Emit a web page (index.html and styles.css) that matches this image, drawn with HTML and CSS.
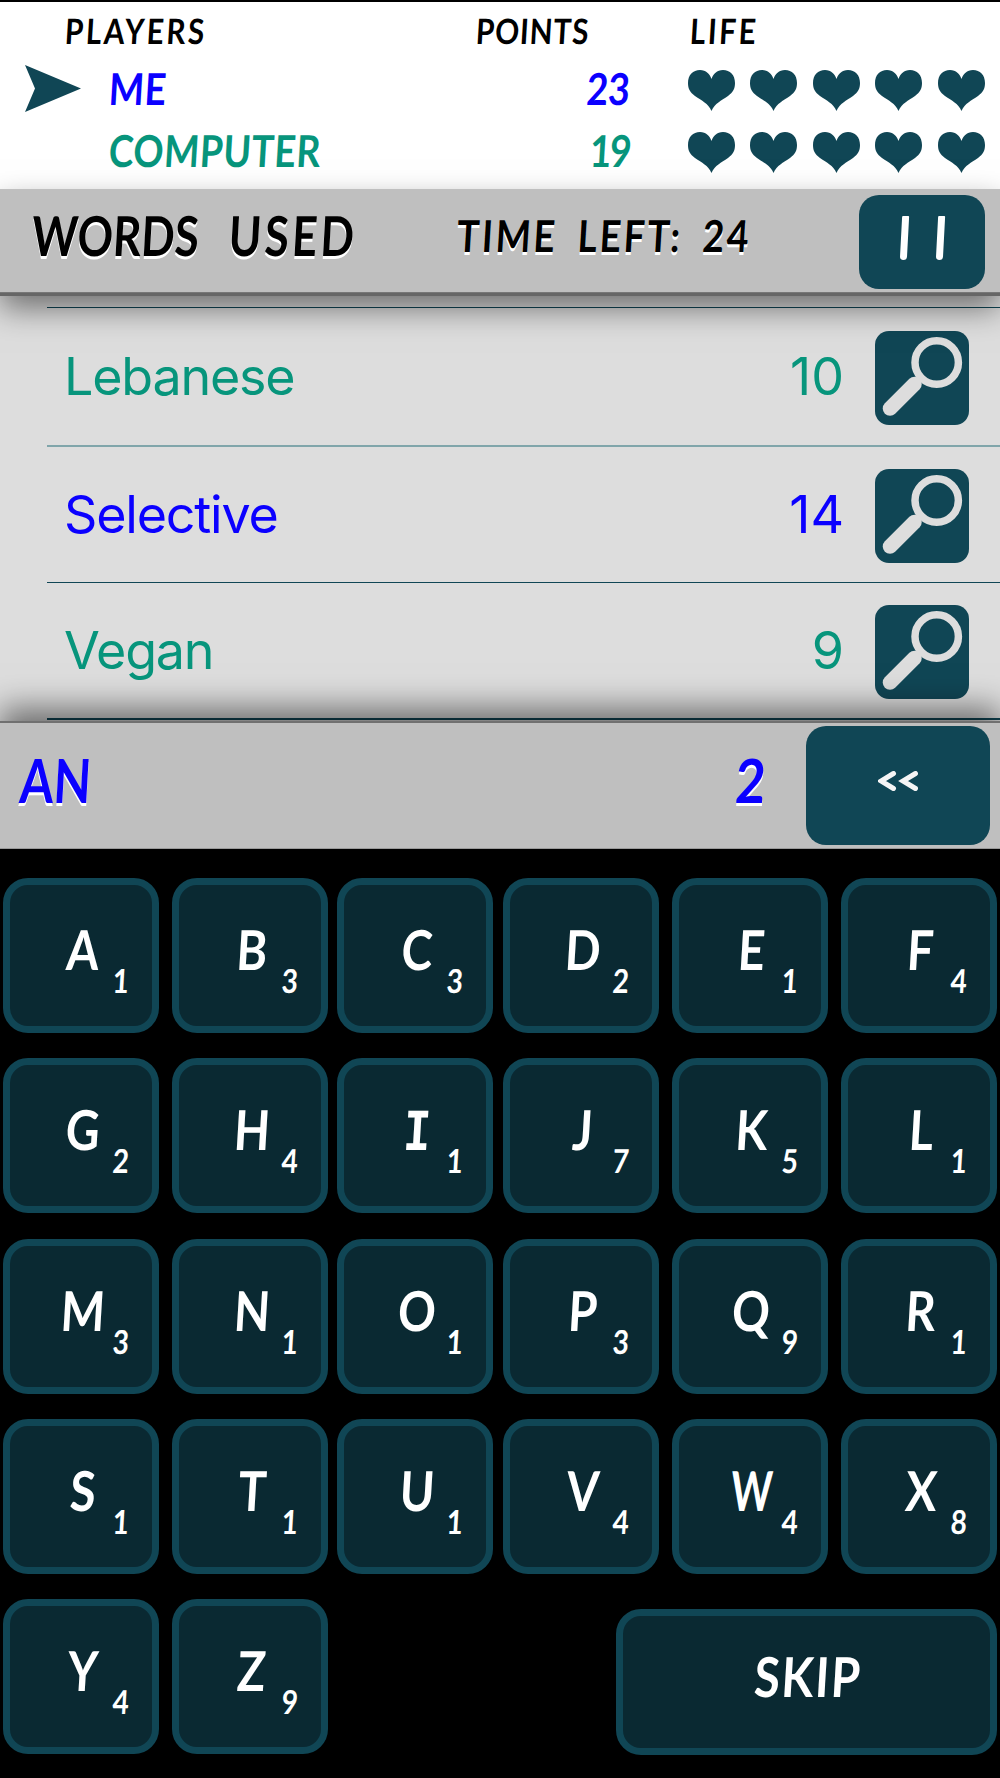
FILE: index.html
```html
<!doctype html>
<html>
<head>
   <title>Words Used</title>
   <meta charset="utf-8">
   <meta name="viewport" content="width=device-width, initial-scale=1.0">
   <link rel="stylesheet" href="styles.css">
</head>
<body>

   <!-- shared icons -->
   <svg class="defs" width="0" height="0">
      <symbol id="heart" viewBox="0 0 47 41">
         <path d="M23.5 41C20 33 14 31 7 26C2 22 0 19 0 13C0 5 5 0 12 0C18 0 22 4 23.5 9C25 4 29 0 35 0C42 0 47 5 47 13C47 19 45 22 40 26C33 31 27 33 23.5 41Z"/>
      </symbol>
      <symbol id="glass" viewBox="0 0 94 94">
         <circle cx="61.7" cy="31.5" r="21.7" fill="none" stroke="#ddd" stroke-width="7.5"/>
         <path d="M15 77.5L39.5 53" fill="none" stroke="#ddd" stroke-width="14.5" stroke-linecap="round"/>
      </symbol>
   </svg>

   <div class="score">
      <div class="score-head">
         <span class="col-name"><b class="t">PLAYERS</b></span>
         <span class="col-points"><b class="t">POINTS</b></span>
         <span class="col-life"><b class="t">LIFE</b></span>
      </div>
      <div class="score-row me">
         <svg class="arrow" viewBox="0 0 56 47"><path d="M0 0L56 23.5L0 47L10 23.5Z"/></svg>
         <b class="t name">ME</b>
         <b class="t pts">23</b>
         <div class="hearts">
            <svg><use href="#heart"/></svg><svg><use href="#heart"/></svg><svg><use href="#heart"/></svg><svg><use href="#heart"/></svg><svg><use href="#heart"/></svg>
         </div>
      </div>
      <div class="score-row computer">
         <span class="arrow"></span>
         <b class="t name">COMPUTER</b>
         <b class="t pts">19</b>
         <div class="hearts">
            <svg><use href="#heart"/></svg><svg><use href="#heart"/></svg><svg><use href="#heart"/></svg><svg><use href="#heart"/></svg><svg><use href="#heart"/></svg>
         </div>
      </div>
   </div>

   <div class="bar">
      <span class="bar-title"><b class="t">WORDS <span class="used">USED</span></b></span>
      <span class="bar-time"><b class="t">TIME LEFT: 24</b></span>
      <div class="btn pause"><i></i><i></i></div>
   </div>

   <div class="words">
      <div class="word computer">
         <span class="txt">Lebanese</span><span class="num">10</span>
         <svg class="look"><use href="#glass"/></svg>
      </div>
      <div class="word me">
         <span class="txt">Selective</span><span class="num">14</span>
         <svg class="look"><use href="#glass"/></svg>
      </div>
      <div class="word computer">
         <span class="txt">Vegan</span><span class="num">9</span>
         <svg class="look"><use href="#glass"/></svg>
      </div>
   </div>

   <div class="entry me">
      <span class="typed"><b class="t">AN</b></span>
      <b class="t total">2</b>
      <div class="btn back"><svg viewBox="0 0 40 20"><path d="M15.500 2.500L3 10L15.500 17.500M37.500 2.500L25 10L37.500 17.500"/></svg></div>
   </div>

   <div class="keys">
      <div class="key"><b class="t">A</b><small class="t">1</small></div>
      <div class="key"><b class="t">B</b><small class="t">3</small></div>
      <div class="key"><b class="t">C</b><small class="t">3</small></div>
      <div class="key"><b class="t">D</b><small class="t">2</small></div>
      <div class="key"><b class="t">E</b><small class="t">1</small></div>
      <div class="key"><b class="t">F</b><small class="t">4</small></div>
      <div class="key"><b class="t">G</b><small class="t">2</small></div>
      <div class="key"><b class="t">H</b><small class="t">4</small></div>
      <div class="key"><b class="t serif-i">I</b><small class="t">1</small></div>
      <div class="key"><b class="t">J</b><small class="t">7</small></div>
      <div class="key"><b class="t">K</b><small class="t">5</small></div>
      <div class="key"><b class="t">L</b><small class="t">1</small></div>
      <div class="key"><b class="t">M</b><small class="t">3</small></div>
      <div class="key"><b class="t">N</b><small class="t">1</small></div>
      <div class="key"><b class="t">O</b><small class="t">1</small></div>
      <div class="key"><b class="t">P</b><small class="t">3</small></div>
      <div class="key"><b class="t">Q</b><small class="t">9</small></div>
      <div class="key"><b class="t">R</b><small class="t">1</small></div>
      <div class="key"><b class="t">S</b><small class="t">1</small></div>
      <div class="key"><b class="t">T</b><small class="t">1</small></div>
      <div class="key"><b class="t">U</b><small class="t">1</small></div>
      <div class="key"><b class="t">V</b><small class="t">4</small></div>
      <div class="key"><b class="t w">W</b><small class="t">4</small></div>
      <div class="key"><b class="t">X</b><small class="t">8</small></div>
      <div class="key"><b class="t">Y</b><small class="t">4</small></div>
      <div class="key"><b class="t">Z</b><small class="t">9</small></div>
      <div class="key skip"><b class="t">SKIP</b></div>
   </div>

</body>
</html>
```

FILE: styles.css
```css
*{
   box-sizing: border-box;
}

body{
   margin: 0;
   width: 1000px;
   height: 1778px;
   overflow: hidden;
   background: #000;
   color: #000;
   font-family: Lato, sans-serif;
}

.defs{
   display: block;
}

/* narrow, slightly slanted lettering */
.t{
   display: inline-block;
   font-weight: bold;
   white-space: nowrap;
   transform: scaleX(.85) skewX(-4deg);
   transform-origin: 0 50%;
}

.me{
   color: #0b00ff;
}

.computer{
   color: #07957c;
}

/* scoreboard */
.score{
   height: 189px;
   background: #fff;
   border-top: 2px solid #000;
}

.score-head{
   display: flex;
   height: 55px;
   line-height: 57px;
   font-size: 35px;
   letter-spacing: 3px;
}

.col-name{
   width: 476px;
   padding-left: 65px;
}

.col-points{
   width: 214px;
   letter-spacing: 1px;
}

.score-row{
   display: flex;
   align-items: center;
   height: 62.5px;
   padding-left: 25px;
   font-size: 44px;
}

.arrow{
   width: 56px;
   height: 47px;
   margin-right: 28px;
   fill: #104655;
}

.name{
   flex: 1;
   margin-top: -1px;
   letter-spacing: .5px;
}

.pts{
   margin-top: -1px;
   transform-origin: 100% 50%;
}

.computer .pts{
   letter-spacing: -2px;
}

.hearts{
   display: flex;
   gap: 15.500px;
   width: 370px;
   padding-left: 57.500px;
   margin-top: 4px;
}

.hearts svg{
   flex: none;
   width: 47px;
   height: 41px;
   fill: #104655;
}

/* title bar */
.bar{
   position: relative;
   z-index: 1;
   display: flex;
   height: 104px;
   padding: 6px 15px 0 32px;
   background: #bfbfbf;
   border-bottom: 1px solid #777;
   box-shadow: 0 3px 0 #666, 0 15px 30px rgba(0,0,0,.5);
   line-height: 81px;
   text-shadow: 0 3px 0 #fff;
}

.bar-title{
   width: 425px;
   font-size: 55px;
   word-spacing: 24px;
}

.bar-title .t{
   transform: scaleX(.8) skewX(-4deg);
}

.used{
   letter-spacing: 4px;
}

.bar-time{
   flex: 1;
   font-size: 44px;
   letter-spacing: 3px;
   word-spacing: 10px;
}

.btn{
   display: flex;
   justify-content: center;
   background: #104655;
   border-radius: 20px;
}

.pause{
   width: 126px;
   height: 94px;
   gap: 30px;
   padding-top: 21px;
}

.pause i{
   width: 6.500px;
   height: 44px;
   background: #fff;
   border-radius: 1px 1px 4px 4px;
   transform: skewX(-3deg);
}

/* list of used words */
.words{
   height: 430px;
   padding: 14px 0 0 47px;
   background: #ddd;
   font-family: Inter, sans-serif;
   font-size: 52px;
}

.word{
   display: flex;
   align-items: center;
   height: 137.500px;
   padding: 0 31px 0 17px;
   border-top: 1.500px solid #104655;
}

.word:nth-child(2){
   border-top: 2px solid #80a5aa;
}

.word:last-child{
   border-bottom: 2px solid #104655;
}

.txt{
   letter-spacing: -1.200px;
}

.num{
   margin-left: auto;
}

.look{
   width: 94px;
   height: 94px;
   margin: 3px 0 0 31px;
   background: #104655;
   border-radius: 14px;
}

/* current entry */
.entry{
   position: relative;
   z-index: 1;
   display: flex;
   height: 126px;
   padding: 3px 10px 0 20px;
   background: #bfbfbf;
   border-bottom: 1px solid #999;
   box-shadow: 0 -2px 0 #707070, 0 -15px 30px rgba(0,0,0,.5);
   font-size: 61px;
   line-height: 108px;
   text-shadow: 0 3px 0 #fff;
}

.typed{
   flex: 1;
}

.typed .t{
   transform: scaleX(.8) skewX(-4deg);
}

.total{
   margin-right: 41px;
   transform-origin: 100% 50%;
}

.back{
   width: 184px;
   height: 119px;
   padding-top: 45px;
}

.back svg{
   width: 40px;
   height: 20px;
   fill: none;
   stroke: #f5f5f5;
   stroke-width: 5;
   stroke-linecap: round;
}

/* keyboard */
.keys{
   position: relative;
   z-index: 2;
   display: grid;
   grid-template-columns: 169px 165px 166px 168.500px 169.500px 156px;
   grid-template-rows: repeat(4, 180.300px) 156px;
   height: 929px;
   padding: 29px 3px 0;
   background: #000;
   color: #fff;
}

.key{
   position: relative;
   width: 156px;
   height: 155px;
   padding-left: 4px;
   background: #0a2932;
   border: 7.500px solid #104655;
   border-radius: 25px;
   font-size: 55px;
   line-height: 128px;
   text-align: center;
}

.key .t{
   transform-origin: 50% 50%;
}

.key .w{
   transform: scaleX(.72) skewX(-4deg);
}

.key small{
   position: absolute;
   right: 11px;
   bottom: 26px;
   width: 40px;
   font-size: 33px;
   line-height: 40px;
}

.key .serif-i{
   font-family: "DejaVu Sans Mono", monospace;
   font-size: 54px;
}

.skip{
   grid-column: 4 / 7;
   justify-self: end;
   width: 381px;
   height: 146px;
   margin-top: 10px;
   line-height: 121px;
   letter-spacing: 2px;
}
```
